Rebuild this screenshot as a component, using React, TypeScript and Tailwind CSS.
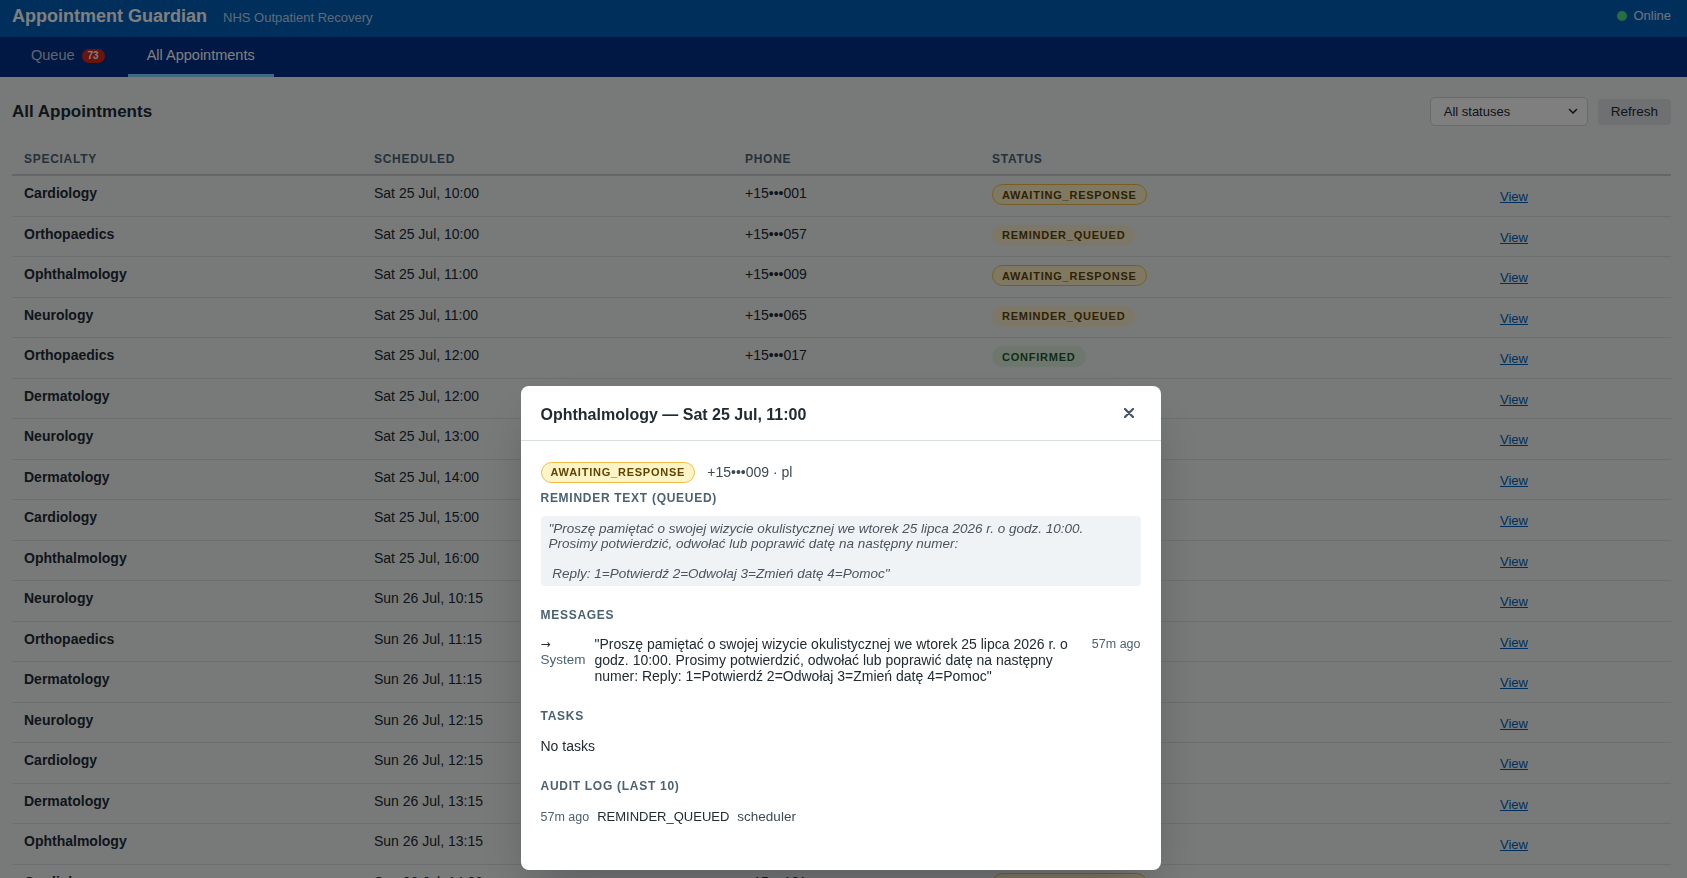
type Status = "AWAITING_RESPONSE" | "REMINDER_QUEUED" | "CONFIRMED"

const rows: [string, string, string, Status][] = [
  ["Cardiology", "Sat 25 Jul, 10:00", "+15•••001", "AWAITING_RESPONSE"],
  ["Orthopaedics", "Sat 25 Jul, 10:00", "+15•••057", "REMINDER_QUEUED"],
  ["Ophthalmology", "Sat 25 Jul, 11:00", "+15•••009", "AWAITING_RESPONSE"],
  ["Neurology", "Sat 25 Jul, 11:00", "+15•••065", "REMINDER_QUEUED"],
  ["Orthopaedics", "Sat 25 Jul, 12:00", "+15•••017", "CONFIRMED"],
  ["Dermatology", "Sat 25 Jul, 12:00", "+15•••073", "REMINDER_QUEUED"],
  ["Neurology", "Sat 25 Jul, 13:00", "+15•••025", "AWAITING_RESPONSE"],
  ["Dermatology", "Sat 25 Jul, 14:00", "+15•••081", "REMINDER_QUEUED"],
  ["Cardiology", "Sat 25 Jul, 15:00", "+15•••033", "CONFIRMED"],
  ["Ophthalmology", "Sat 25 Jul, 16:00", "+15•••089", "REMINDER_QUEUED"],
  ["Neurology", "Sun 26 Jul, 10:15", "+15•••041", "AWAITING_RESPONSE"],
  ["Orthopaedics", "Sun 26 Jul, 11:15", "+15•••097", "REMINDER_QUEUED"],
  ["Dermatology", "Sun 26 Jul, 11:15", "+15•••049", "REMINDER_QUEUED"],
  ["Neurology", "Sun 26 Jul, 12:15", "+15•••105", "CONFIRMED"],
  ["Cardiology", "Sun 26 Jul, 12:15", "+15•••061", "REMINDER_QUEUED"],
  ["Dermatology", "Sun 26 Jul, 13:15", "+15•••113", "AWAITING_RESPONSE"],
  ["Ophthalmology", "Sun 26 Jul, 13:15", "+15•••069", "REMINDER_QUEUED"],
  ["Cardiology", "Sun 26 Jul, 14:00", "+15•••121", "AWAITING_RESPONSE"],
  ["Neurology", "Sun 26 Jul, 15:00", "+15•••077", "REMINDER_QUEUED"],
]

const badgeStyles: Record<Status, string> = {
  AWAITING_RESPONSE: "bg-[#fff3c8] border-[#efbd45] text-[#5f4500]",
  REMINDER_QUEUED: "bg-[#fbefcf] border-transparent text-[#5f4500]",
  CONFIRMED: "bg-[#dcefdd] border-transparent text-[#1c5a2a]",
}

function StatusBadge({ status }: { status: Status }) {
  return (
    <span
      className={`inline-flex h-[21px] items-center rounded-full border px-[9px] text-[11px] font-bold tracking-[0.07em] ${badgeStyles[status]}`}
    >
      {status}
    </span>
  )
}

const reminder =
  '"Proszę pamiętać o swojej wizycie okulistycznej we wtorek 25 lipca 2026 r. o godz. 10:00.\nProsimy potwierdzić, odwołać lub poprawić datę na następny numer:\n\n Reply: 1=Potwierdź 2=Odwołaj 3=Zmień datę 4=Pomoc"'

export default function App() {
  return (
    <div className="min-h-screen bg-[#f0f4f5] font-['Liberation_Sans',Arial,sans-serif] text-[#212b32]">
      {/* Top bar */}
      <header className="flex h-[37px] items-center justify-between bg-[#005eb8] pb-[5px] pl-3 pr-4">
        <div className="flex items-baseline gap-4">
          <span className="text-[18px] font-bold text-white">Appointment Guardian</span>
          <span className="text-[13px] text-white/75">NHS Outpatient Recovery</span>
        </div>
        <div className="flex items-center gap-[6px] text-[13px] text-white/85">
          <span className="h-[10px] w-[10px] rounded-full bg-[#4ade80]" />
          Online
        </div>
      </header>

      {/* Tabs */}
      <nav className="flex h-[40px] bg-[#003087] pl-[11px] text-[14.5px]">
        <button className="flex items-center border-b-[3px] border-transparent px-5 text-white/75">
          Queue
          <span className="ml-[7px] flex h-[14px] items-center rounded-full bg-[#d5281b] px-[6px] text-[10px] font-bold text-white">
            73
          </span>
        </button>
        <button className="ml-[3px] flex items-center border-b-[3px] border-[#7dd3fc] px-[19px] text-white">
          All Appointments
        </button>
      </nav>

      <main className="pl-3 pr-4">
        <div className="mt-5 flex h-[29px] items-center justify-between">
          <h2 className="text-[17px] font-bold">All Appointments</h2>
          <div className="flex items-center gap-[10px]">
            <div className="flex h-[29px] w-[158px] items-center justify-between rounded-[5px] border border-[#d0d4d8] bg-white pl-[13px] pr-[9px] text-[13px]">
              All statuses
              <svg width="10" height="7" viewBox="0 0 10 7" fill="none">
                <path d="M1.5 1.5L5 5l3.5-3.5" stroke="#212b32" strokeWidth="1.6" strokeLinecap="round" strokeLinejoin="round" />
              </svg>
            </div>
            <button className="h-[26px] rounded-[4px] bg-[#dde1e3] px-[13px] pt-px text-[13.5px]">Refresh</button>
          </div>
        </div>

        {/* Appointments table */}
        <div className="mt-[18px]">
          <div className="grid h-[32px] grid-cols-[350px_371px_247px_508px_1fr] items-center border-b-2 border-[#c8ccd0] pb-[1px] text-[12px] font-bold tracking-[0.06em] text-[#4c6272]">
            <div className="px-3">SPECIALTY</div>
            <div className="px-3">SCHEDULED</div>
            <div className="px-3">PHONE</div>
            <div className="px-3">STATUS</div>
            <div />
          </div>
          {rows.map(([specialty, when, phone, status], i) => (
            <div
              key={i}
              className="grid h-[40.5px] grid-cols-[350px_371px_247px_508px_1fr] items-start border-b border-[#d8dde0] pt-[9px] text-[14px] leading-4"
            >
              <div className="px-3 font-bold">{specialty}</div>
              <div className="px-3">{when}</div>
              <div className="px-3">{phone}</div>
              <div className="-mt-px px-3">
                <StatusBadge status={status} />
              </div>
              <div className="px-3 pt-[3px]">
                <a className="text-[13px] text-[#005eb8] underline">View</a>
              </div>
            </div>
          ))}
        </div>
      </main>

      {/* Appointment detail dialog */}
      <div className="fixed inset-0 flex justify-center bg-black/50 pr-[6px] pt-[386px]">
        <div className="h-fit w-[640px] rounded-lg bg-white shadow-2xl">
          <div className="flex h-[55px] items-center justify-between border-b border-[#d8dde0] px-5 pt-[3px]">
            <h3 className="text-[16px] font-bold">Ophthalmology — Sat 25 Jul, 11:00</h3>
            <button className="-mt-[4px] flex h-6 w-6 items-center justify-center">
              <svg width="10" height="10" viewBox="0 0 10 10">
                <path d="M1 1l8 8M9 1L1 9" stroke="#425563" strokeWidth="2.2" strokeLinecap="round" />
              </svg>
            </button>
          </div>

          <div className="px-5 pb-[45px] pt-[21px]">
            <div className="flex items-center gap-3">
              <StatusBadge status="AWAITING_RESPONSE" />
              <span className="text-[14px] text-[#3d4a54]">+15•••009 · pl</span>
            </div>

            <h4 className="mt-2 text-[12px] font-bold leading-[14px] tracking-[0.06em] text-[#4c6272]">
              REMINDER TEXT (QUEUED)
            </h4>
            <div className="mt-[11px] whitespace-pre-wrap rounded-[4px] bg-[#f0f3f5] px-2 py-[5px] text-[13.5px] italic leading-[15px] text-[#4a5560]">
              {reminder}
            </div>

            <h4 className="mt-[22px] text-[12px] font-bold leading-[14px] tracking-[0.06em] text-[#4c6272]">
              MESSAGES
            </h4>
            <div className="mt-[14px] flex gap-2 text-[14px] leading-[16px]">
              <div className="w-[46px] shrink-0 text-[13.5px] text-[#4c6272]">
                <div className="font-['DejaVu_Sans',sans-serif] text-[12px] text-[#212b32]">→</div>
                <div>System</div>
              </div>
              <div className="flex-1 pr-3">
                "Proszę pamiętać o swojej wizycie okulistycznej we wtorek 25 lipca 2026 r. o godz. 10:00. Prosimy
                potwierdzić, odwołać lub poprawić datę na następny numer: Reply: 1=Potwierdź 2=Odwołaj 3=Zmień datę
                4=Pomoc"
              </div>
              <div className="shrink-0 text-[12.5px] text-[#4c6272]">57m ago</div>
            </div>

            <h4 className="mt-[25px] text-[12px] font-bold leading-[14px] tracking-[0.06em] text-[#4c6272]">TASKS</h4>
            <p className="mt-[15px] text-[14px] leading-4">No tasks</p>

            <h4 className="mt-[25px] text-[12px] font-bold leading-[14px] tracking-[0.06em] text-[#4c6272]">
              AUDIT LOG (LAST 10)
            </h4>
            <div className="mt-4 flex items-baseline gap-2 text-[13px] leading-4">
              <span className="text-[12.5px] text-[#4c6272]">57m ago</span>
              <span>REMINDER_QUEUED</span>
              <span className="text-[13.5px] text-[#3d4a54]">scheduler</span>
            </div>
          </div>
        </div>
      </div>
    </div>
  )
}
